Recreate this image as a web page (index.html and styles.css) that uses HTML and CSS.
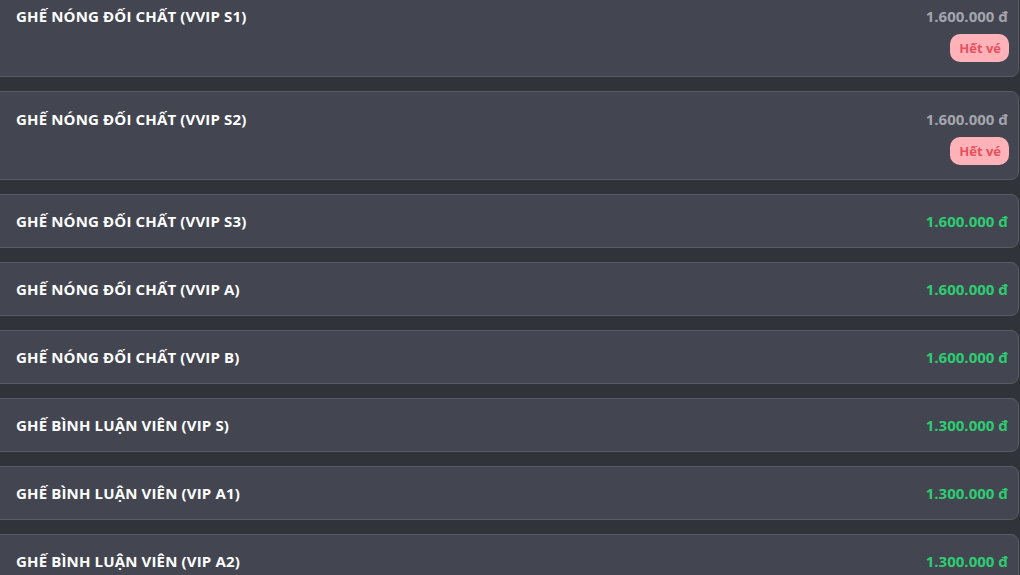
FILE: index.html
```html
<!DOCTYPE html>
<html lang="vi">
<head>
<meta charset="utf-8">
<title>Danh sách vé</title>
<link rel="stylesheet" href="styles.css">
</head>
<body>
<div class="list">
  <div class="card card--soldout">
    <div class="title">GHẾ NÓNG ĐỐI CHẤT (VVIP S1)</div>
    <div class="side">
      <div class="price price--off">1.600.000 đ</div>
      <div class="badge">Hết vé</div>
    </div>
  </div>
  <div class="card card--soldout">
    <div class="title">GHẾ NÓNG ĐỐI CHẤT (VVIP S2)</div>
    <div class="side">
      <div class="price price--off">1.600.000 đ</div>
      <div class="badge">Hết vé</div>
    </div>
  </div>
  <div class="card">
    <div class="title">GHẾ NÓNG ĐỐI CHẤT (VVIP S3)</div>
    <div class="side"><div class="price">1.600.000 đ</div></div>
  </div>
  <div class="card">
    <div class="title">GHẾ NÓNG ĐỐI CHẤT (VVIP A)</div>
    <div class="side"><div class="price">1.600.000 đ</div></div>
  </div>
  <div class="card">
    <div class="title">GHẾ NÓNG ĐỐI CHẤT (VVIP B)</div>
    <div class="side"><div class="price">1.600.000 đ</div></div>
  </div>
  <div class="card">
    <div class="title">GHẾ BÌNH LUẬN VIÊN (VIP S)</div>
    <div class="side"><div class="price">1.300.000 đ</div></div>
  </div>
  <div class="card">
    <div class="title">GHẾ BÌNH LUẬN VIÊN (VIP A1)</div>
    <div class="side"><div class="price">1.300.000 đ</div></div>
  </div>
  <div class="card">
    <div class="title">GHẾ BÌNH LUẬN VIÊN (VIP A2)</div>
    <div class="side"><div class="price">1.300.000 đ</div></div>
  </div>
</div>
</body>
</html>
```
FILE: styles.css
```css
html, body {
  margin: 0;
  padding: 0;
  background: #30333a;
  overflow: hidden;
}
body {
  font-family: "Open Sans", "Noto Sans", sans-serif;
  width: 1020px;
  height: 575px;
}
.list {
  display: flex;
  flex-direction: column;
  gap: 14px;
  margin: -12px 0 0 -10px;
  width: 1029px;
}
.card {
  display: flex;
  justify-content: space-between;
  align-items: flex-start;
  background: #434651;
  border: 1px solid #585b66;
  border-radius: 8px;
  padding: 16px 10px 16px 25px;
  box-sizing: border-box;
}
.card--soldout {
  padding-top: 17px;
  padding-bottom: 14px;
}
.title {
  color: #ffffff;
  font-weight: 700;
  font-size: 15px;
  line-height: 20px;
  letter-spacing: 0.15px;
}
.side {
  display: flex;
  flex-direction: column;
  align-items: flex-end;
  gap: 8px;
}
.price {
  color: #2ecc71;
  font-weight: 700;
  font-size: 15px;
  line-height: 20px;
}
.price--off {
  color: #a3a5ae;
}
.badge {
  background: #ffb3b8;
  color: #e8505e;
  font-weight: 700;
  font-size: 13px;
  line-height: 28px;
  height: 28px;
  padding: 0 8px 0 9px;
  margin-right: -1px;
  border-radius: 10px;
}
```
